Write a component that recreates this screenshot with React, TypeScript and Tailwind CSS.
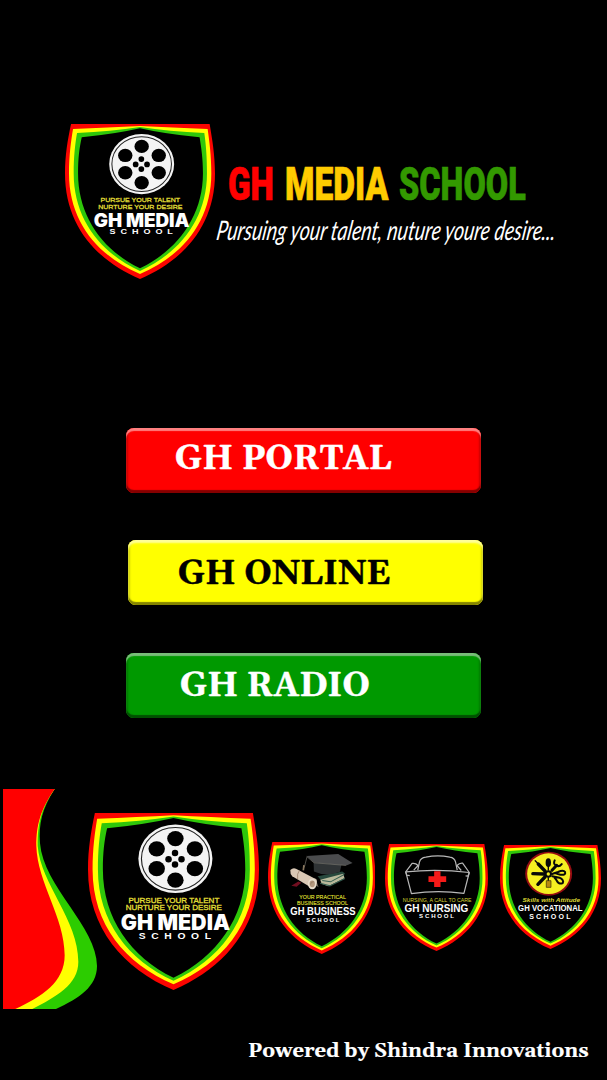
import { useLayoutEffect, useRef, useState } from "react";
import type { ReactNode } from "react";

/* One line of text, stretched or condensed to a given width. */
function FitText({ width, className, slant = 0, children }: { width: number; className: string; slant?: number; children: string }) {
  const ref = useRef<HTMLSpanElement>(null);
  const [scale, setScale] = useState(1);
  useLayoutEffect(() => {
    if (ref.current) setScale(width / ref.current.offsetWidth);
  }, [width]);
  return (
    <span className="block shrink-0" style={{ width }}>
      <span
        ref={ref}
        className={`inline-block origin-left whitespace-nowrap ${className}`}
        style={{ transform: `skewX(${-slant}deg) scaleX(${scale})` }}
      >
        {children}
      </span>
    </span>
  );
}

function Shield({ className, children }: { className: string; children: ReactNode }) {
  return (
    <svg viewBox="30 27 448 464" preserveAspectRatio="none" className={className}>
      <path fill="#fb0500" d="M48 27H462C470 75 478 120 478 175C478 330 385 435 254 491C123 435 30 330 30 175C30 120 38 75 48 27Z" />
      <path fill="#ffff00" d="M54 42Q160 38 254 33Q348 38 456 42C461 78 467 120 467 175C467 320 380 422 254 476C128 422 42 320 42 175C42 120 48 78 54 42Z" />
      <path fill="#2fc70a" d="M66 54Q168 49 254 36Q340 49 446 54C451 88 454 125 454 175C454 310 373 413 254 467C135 413 56 310 56 175C56 125 60 88 66 54Z" />
      <path fill="#000" d="M80 67Q180 57 254 40Q328 57 432 67C437 98 442 130 442 175C442 302 366 405 254 459C142 405 69 302 69 175C69 130 73 98 80 67Z" />
      {children}
    </svg>
  );
}

const HOLES = [[259, 94], [210, 121], [310, 121], [210, 173], [310, 173], [259, 203]];
const PINS = [[258, 132], [241, 148], [275, 148], [258, 162]];

function MediaShield({ className }: { className: string }) {
  return (
    <Shield className={className}>
      <ellipse cx="259" cy="147" rx="97" ry="90" fill="#f4f4f4" />
      <ellipse cx="259" cy="147" rx="89" ry="82" fill="none" stroke="#222" strokeWidth="3" />
      {HOLES.map(([x, y]) => <ellipse key={`${x}-${y}`} cx={x} cy={y} rx="21.5" ry="20" fill="#000" />)}
      {PINS.map(([x, y]) => <circle key={`${x}-${y}`} cx={x} cy={y} r="8.5" fill="#000" />)}
      <g fill="#e1df36" stroke="#e1df36" strokeWidth=".8" fontFamily="Liberation Sans, sans-serif" fontSize="18">
        <text x="136" y="262" textLength="238" lengthAdjust="spacingAndGlyphs">PURSUE YOUR TALENT</text>
        <text x="129" y="281" textLength="252" lengthAdjust="spacingAndGlyphs">NURTURE YOUR DESIRE</text>
      </g>
      <g fill="#fff">
        <text x="116" y="334" fontFamily="Inter, sans-serif" fontSize="55" fontWeight="900" textLength="286" lengthAdjust="spacingAndGlyphs">GH MEDIA</text>
        <text x="163" y="357" fontFamily="Liberation Sans, sans-serif" fontSize="22" fontWeight="700" letterSpacing="12" textLength="204" lengthAdjust="spacingAndGlyphs">SCHOOL</text>
      </g>
    </Shield>
  );
}

function BusinessShield({ className }: { className: string }) {
  return (
    <Shield className={className}>
      <g transform="translate(30 27) scale(1.387) translate(-17 -35)">
        <path fill="#6b6259" d="M130 139L160 144L169 170L150 158Z" />
        <path fill="#27483d" d="M166 137L240 123L249 129L210 148L175 148Z" />
        <path fill="#b8b89a" d="M174 148L243 130L247 143L198 167L178 160Z" />
        <path fill="none" stroke="#376052" strokeWidth="3" d="M174 158L203 166L248 144M180 150L205 154L246 132" />
        <path fill="#2f3335" d="M154 96L238 102L233 124Q192 140 155 123Z" />
        <path fill="#4b4c4e" d="M133 77L228 71L271 98L252 105L155 96Z" />
        <path fill="none" stroke="#76746d" strokeWidth="2" d="M133 78L155 97L251 105M134 80L126 111" />
        <path stroke="#8a785f" strokeWidth="5" d="M125 104L123 120" />
        <path fill="#d9c8b5" d="M84 119Q92 111 101 115L163 147Q168 160 150 173L90 137Q83 131 84 119Z" />
        <ellipse cx="150" cy="160" rx="13" ry="16" fill="#e7dccb" />
        <ellipse cx="150" cy="160" rx="8" ry="10" fill="#b3987e" />
        <path fill="none" stroke="#8d7059" strokeWidth="2" d="M112 119Q103 130 106 146M154 154Q145 153 145 162" />
        <path fill="#720e20" d="M87 166L108 153L117 157L103 169Z" />
        <g fill="#d6d72d" stroke="#d6d72d" strokeWidth=".5" fontFamily="Liberation Sans, sans-serif" fontSize="15">
          <text x="111" y="205" textLength="140" lengthAdjust="spacingAndGlyphs">YOUR PRACTICAL</text>
          <text x="104" y="222" textLength="153" lengthAdjust="spacingAndGlyphs">BUSINESS SCHOOL</text>
        </g>
        <g fill="#fff" fontFamily="Liberation Sans, sans-serif" fontWeight="700">
          <text x="84" y="253" fontSize="30" textLength="196" lengthAdjust="spacingAndGlyphs">GH BUSINESS</text>
          <text x="132" y="273" fontSize="17" letterSpacing="5" textLength="104" lengthAdjust="spacingAndGlyphs">SCHOOL</text>
        </g>
      </g>
    </Shield>
  );
}

function NursingShield({ className }: { className: string }) {
  return (
    <Shield className={className}>
      <g transform="translate(30 27) scale(1.4545) translate(-22 -41)">
        <g fill="none" stroke="#b8b8b8" strokeWidth="3.6" strokeLinejoin="round">
          <path d="M120 119L125 95Q128 82 144 80Q180 73 216 80Q230 82 233 95L238 119" />
          <path d="M84 124Q178 114 274 126L258 188Q178 177 101 189Z" />
          <path d="M84 124L103 99Q113 97 121 105L108 119M274 126L254 98Q245 97 237 105L250 120M84 124L87 134L96 135M274 126L270 137L263 136" />
        </g>
        <path fill="#f51a18" d="M169 122H188V137H205V154H188V169H169V154H152V137H169Z" />
        <text x="75" y="213" fill="#d7d431" fontFamily="Liberation Sans, sans-serif" fontSize="14" textLength="206" lengthAdjust="spacingAndGlyphs">NURSING, A CALL TO CARE</text>
        <g fill="#fff" fontFamily="Liberation Sans, sans-serif" fontWeight="700">
          <text x="80" y="243" fontSize="31" textLength="191" lengthAdjust="spacingAndGlyphs">GH NURSING</text>
          <text x="124" y="263" fontSize="17" letterSpacing="5" textLength="110" lengthAdjust="spacingAndGlyphs">SCHOOL</text>
        </g>
      </g>
    </Shield>
  );
}

function VocationalShield({ className }: { className: string }) {
  return (
    <Shield className={className}>
      <g transform="translate(30 27) scale(1.488) translate(-32 -45)">
        <ellipse cx="177" cy="131" rx="70" ry="66" fill="#960d12" />
        <ellipse cx="177" cy="131" rx="64" ry="61" fill="#f5ef21" />
        <g stroke="#080808" fill="none" strokeLinecap="round">
          <path strokeWidth="10" d="M166 123L146 102M163 132L130 131M166 141L145 163" />
          <path strokeWidth="4" d="M137 92L166 123M176 120V104M176 143V156" />
          <path strokeWidth="9" d="M187 121L201 106" />
          <path strokeWidth="6" d="M195 91Q190 102 199 106Q208 112 216 102M187 132L205 126Q221 118 226 126Q229 136 212 134L198 130M188 139L209 143Q224 150 219 159Q207 165 200 150L194 142" />
        </g>
        <ellipse cx="176" cy="98" rx="8" ry="13" fill="#090909" />
        <circle cx="176" cy="132" r="11" fill="#090909" />
        <circle cx="176" cy="132" r="5" fill="#f5ef21" />
        <path fill="#b78b12" stroke="#342c08" strokeWidth="2" d="M170 152H184V172H170Z" />
        <text x="99" y="215" fill="#ddd834" fontFamily="Liberation Sans, sans-serif" fontWeight="700" fontStyle="italic" fontSize="18" textLength="172" lengthAdjust="spacingAndGlyphs">Skills with Attitude</text>
        <g fill="#fff" fontFamily="Liberation Sans, sans-serif" fontWeight="700">
          <text x="86" y="244" fontSize="26" textLength="192" lengthAdjust="spacingAndGlyphs">GH VOCATIONAL</text>
          <text x="119" y="266" fontSize="19" letterSpacing="6" textLength="130" lengthAdjust="spacingAndGlyphs">SCHOOL</text>
        </g>
      </g>
    </Shield>
  );
}

const BUTTON = "flex h-[65px] w-[355px] items-start rounded-[8px] text-left";
const LABEL = "font-['Gelasio','Georgia','Liberation_Serif',serif] text-[35px] font-bold leading-[41px] [-webkit-text-stroke:0.5px_currentColor]";

export default function App() {
  return (
    <main className="flex h-[1080px] w-[607px] flex-col overflow-hidden bg-black text-white">
      <header className="flex h-[304px] shrink-0 pl-[65px] pt-[124px]">
        <MediaShield className="h-[155px] w-[150px] shrink-0" />
        <div className="pt-[34px]">
          <h1 className="flex h-[50px] pl-[13px] font-['Roboto',sans-serif] text-[46px] font-black leading-[52px] [-webkit-text-stroke:0.7px_currentColor]">
            <FitText width={46} className="text-[#ff0000]">GH</FitText>
            <span className="w-[11px]" />
            <FitText width={103} className="text-[#ffcc00]">MEDIA</FitText>
            <span className="w-[11px]" />
            <FitText width={127} className="text-[#339900]">SCHOOL</FitText>
          </h1>
          <p className="pl-[2px] font-['Lato',sans-serif] text-[27px] font-normal italic leading-[44px]">
            <FitText width={339} slant={9}>Pursuing your talent, nuture youre desire...</FitText>
          </p>
        </div>
      </header>

      <nav className="flex h-[485px] shrink-0 flex-col gap-[47.5px] pl-[126px] pt-[123.5px]">
        <button className={`${BUTTON} bg-[#ff0000] pl-[49px] pt-[11px] shadow-[inset_0_3px_1px_#ff8080,inset_0_-3px_1px_#850000,inset_2px_0_2px_#c90000,inset_-2px_0_2px_#c90000]`}>
          <FitText width={217} className={LABEL}>GH PORTAL</FitText>
        </button>
        <button className={`${BUTTON} ml-[2px] bg-[#ffff00] pl-[50px] pt-[14px] text-black shadow-[inset_0_3px_2px_#ffff9a,inset_0_-3px_1px_#858500,inset_2px_0_2px_#d0d000,inset_-2px_0_2px_#d0d000]`}>
          <FitText width={212} className={LABEL}>GH ONLINE</FitText>
        </button>
        <button className={`${BUTTON} bg-[#009900] pl-[54px] pt-[13px] shadow-[inset_0_3px_1px_#79bd79,inset_0_-3px_1px_#005000,inset_2px_0_2px_#007c00,inset_-2px_0_2px_#007c00]`}>
          <FitText width={190} className={LABEL}>GH RADIO</FitText>
        </button>
      </nav>

      <section className="flex h-[220px] shrink-0 items-start pl-[3px]">
        <svg viewBox="9 27 282 660" preserveAspectRatio="none" className="h-[220px] w-[94px] shrink-0">
          <path fill="#2ccc00" d="M164 27C126 88 116 130 120 190C130 320 291 440 291 558C291 620 237 655 168 687H46V27Z" />
          <path fill="#ffff00" d="M164 27C122 88 113 130 113 198C122 312 235 420 235 545C235 615 167 650 97 687H40V27Z" />
          <path fill="#ff0000" d="M9 27H164C121 90 109 135 109 198C112 308 194 412 194 526C194 607 125 651 46 687H9Z" />
        </svg>
        <MediaShield className="-ml-[9.5px] mt-[24px] h-[177px] w-[171px] shrink-0" />
        <BusinessShield className="ml-[9px] mt-[52.5px] h-[112px] w-[107.5px] shrink-0" />
        <NursingShield className="ml-[10px] mt-[54.5px] h-[107px] w-[103px] shrink-0" />
        <VocationalShield className="ml-[12px] mt-[56px] h-[104px] w-[101px] shrink-0" />
      </section>

      <footer className="flex justify-end pr-[18px] pt-[28px]">
        <FitText width={341} className="font-['Gelasio','Georgia','Liberation_Serif',serif] text-[20.5px] font-bold leading-[28px] [-webkit-text-stroke:0.2px_currentColor]">Powered by Shindra Innovations</FitText>
      </footer>
    </main>
  );
}
